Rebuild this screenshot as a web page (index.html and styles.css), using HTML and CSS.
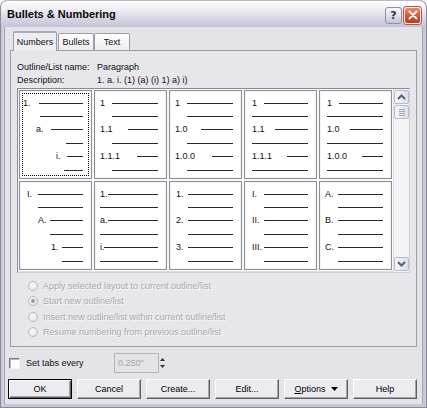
FILE: index.html
```html
<!DOCTYPE html>
<html>
<head>
<meta charset="utf-8">
<link rel="stylesheet" href="styles.css">
</head>
<body>
<div class="window">
  <div class="titlebar">
    <span class="title">Bullets &amp; Numbering</span>
    <div class="tbtns">
      <span class="tb help">?</span>
      <span class="tb close"><svg width="10" height="10" viewBox="0 0 10 10"><path d="M1.5 1.5 L8.5 8.5 M8.5 1.5 L1.5 8.5" stroke="#fff" stroke-width="2" stroke-linecap="round"/></svg></span>
    </div>
  </div>
  <div class="client">
    <div class="tabs">
      <span class="tab active">Numbers</span>
      <span class="tab t-bul">Bullets</span>
      <span class="tab t-txt">Text</span>
    </div>
    <div class="panel">
      <div class="info">
        <span>Outline/List name:</span><span>Paragraph</span>
        <span>Description:</span><span>1. a. i. (1) (a) (i) 1) a) i)</span>
      </div>
      <div class="gallery">
        <div class="cells">
          <div class="cell sel">
            <div class="r p3"><b class="w16">1.</b><i></i></div>
            <div class="r p20"><i></i></div>
            <div class="r p16"><b class="w15">a.</b><i></i></div>
            <div class="r p46"><i></i></div>
            <div class="r p36"><b class="w11">i.</b><i></i></div>
            <div class="r p44"><i></i></div>
          </div>
          <div class="cell">
            <div class="r p5"><b class="w12">1</b><i></i></div>
            <div class="r p17"><i></i></div>
            <div class="r p5"><b class="w28">1.1</b><i></i></div>
            <div class="r p17"><i></i></div>
            <div class="r p5"><b class="w37">1.1.1</b><i></i></div>
            <div class="r p17"><i></i></div>
          </div>
          <div class="cell">
            <div class="r p5"><b class="w12">1</b><i></i></div>
            <div class="r p17"><i></i></div>
            <div class="r p5"><b class="w26">1.0</b><i></i></div>
            <div class="r p17"><i></i></div>
            <div class="r p5"><b class="w37">1.0.0</b><i></i></div>
            <div class="r p17"><i></i></div>
          </div>
          <div class="cell">
            <div class="r p7"><b class="w12">1</b><i></i></div>
            <div class="r p7"><i></i></div>
            <div class="r p7"><b class="w23">1.1</b><i></i></div>
            <div class="r p7"><i></i></div>
            <div class="r p7"><b class="w35">1.1.1</b><i></i></div>
            <div class="r p7"><i></i></div>
          </div>
          <div class="cell">
            <div class="r p7"><b class="w12">1</b><i></i></div>
            <div class="r p7"><i></i></div>
            <div class="r p7"><b class="w23">1.0</b><i></i></div>
            <div class="r p7"><i></i></div>
            <div class="r p7"><b class="w35">1.0.0</b><i></i></div>
            <div class="r p7"><i></i></div>
          </div>
          <div class="cell">
            <div class="r p7"><b class="w11">I.</b><i></i></div>
            <div class="r p18"><i></i></div>
            <div class="r p18"><b class="w12">A.</b><i></i></div>
            <div class="r p30"><i></i></div>
            <div class="r p31"><b class="w11">1.</b><i></i></div>
            <div class="r p42"><i></i></div>
          </div>
          <div class="cell">
            <div class="r p5"><b class="w8">1.</b><i></i></div>
            <div class="r p5"><i></i></div>
            <div class="r p5"><b class="w8">a.</b><i></i></div>
            <div class="r p5"><i></i></div>
            <div class="r p5"><b class="w4">i.</b><i></i></div>
            <div class="r p5"><i></i></div>
          </div>
          <div class="cell">
            <div class="r p6"><b class="w12">1.</b><i></i></div>
            <div class="r p18"><i></i></div>
            <div class="r p6"><b class="w12">2.</b><i></i></div>
            <div class="r p18"><i></i></div>
            <div class="r p6"><b class="w12">3.</b><i></i></div>
            <div class="r p18"><i></i></div>
          </div>
          <div class="cell">
            <div class="r p7"><b class="w12">I.</b><i></i></div>
            <div class="r p19"><i></i></div>
            <div class="r p7"><b class="w12">II.</b><i></i></div>
            <div class="r p19"><i></i></div>
            <div class="r p7"><b class="w12">III.</b><i></i></div>
            <div class="r p19"><i></i></div>
          </div>
          <div class="cell">
            <div class="r p5"><b class="w13">A.</b><i></i></div>
            <div class="r p18"><i></i></div>
            <div class="r p5"><b class="w13">B.</b><i></i></div>
            <div class="r p18"><i></i></div>
            <div class="r p5"><b class="w13">C.</b><i></i></div>
            <div class="r p18"><i></i></div>
          </div>
        </div>
        <div class="vscroll">
          <span class="sbtn"><svg width="9" height="6" viewBox="0 0 9 6"><path d="M1 5 L4.5 1.5 L8 5" fill="none" stroke="#4d6185" stroke-width="2"/></svg></span>
          <span class="thumb"><i></i><i></i><i></i><i></i></span>
          <span class="track"></span>
          <span class="sbtn"><svg width="9" height="6" viewBox="0 0 9 6"><path d="M1 1 L4.5 4.5 L8 1" fill="none" stroke="#4d6185" stroke-width="2"/></svg></span>
        </div>
      </div>
      <div class="radios">
        <label class="radio"><span class="dot"></span>Apply selected layout to current outline/list</label>
        <label class="radio"><span class="dot on"></span>Start new outline/list</label>
        <label class="radio"><span class="dot"></span>Insert new outline/list within current outline/list</label>
        <label class="radio"><span class="dot"></span>Resume numbering from previous outline/list</label>
      </div>
    </div>
    <div class="tabsrow">
      <span class="check"></span>
      <span class="tlabel">Set tabs every</span>
      <span class="spin"><span class="field">0.250"</span><span class="arrows"><svg width="7" height="14" viewBox="0 0 7 14"><path d="M3.5 2 L6 5 L1 5 Z M1 9 L6 9 L3.5 12 Z" fill="#333"/></svg></span></span>
    </div>
    <div class="buttons">
      <span class="btn def">OK</span>
      <span class="btn">Cancel</span>
      <span class="btn">Create...</span>
      <span class="btn">Edit...</span>
      <span class="btn"><span><u>O</u>ptions</span><svg width="7" height="4" viewBox="0 0 7 4"><path d="M0 0 L7 0 L3.5 4 Z" fill="#000"/></svg></span>
      <span class="btn">Help</span>
    </div>
  </div>
</div>
</body>
</html>
```
FILE: styles.css
```css
* { box-sizing: border-box; }
html, body { margin: 0; padding: 0; background: #ffffff; }
body {
  font-family: "Liberation Sans", Arial, sans-serif;
  font-size: 9px;
  color: #000;
}
.window {
  width: 427px;
  height: 408px;
  display: flex;
  flex-direction: column;
  background: linear-gradient(to right, #b7b7c6 0, #dcdce6 2px, #c9c9d6 3px);
  padding: 0 3px 3px 3px;
  border: 1px solid #8b8ba0;
  border-top: none;
  border-radius: 7px 7px 0 0;
  overflow: hidden;
}
.titlebar {
  height: 27px;
  flex: none;
  margin: 0 -3px;
  padding: 0 5px 0 6px;
  display: flex;
  align-items: center;
  justify-content: space-between;
  background: linear-gradient(to bottom, #ffffff 0%, #f2f2f7 25%, #dcdce6 60%, #c3c3d3 100%);
  border-top: 1px solid #b9b9c9;
  border-radius: 7px 7px 0 0;
}
.title {
  font-size: 11px;
  font-weight: bold;
  color: #0a0a0a;
  letter-spacing: 0;
}
.tbtns { display: flex; gap: 2px; margin-top: 2px; }
.tb {
  width: 17px;
  height: 17px;
  border-radius: 3px;
  display: flex;
  align-items: center;
  justify-content: center;
}
.help {
  background: linear-gradient(to bottom, #f8f8fc, #c5c7d6);
  border: 1px solid #8d8fa5;
  color: #30304a;
  font-weight: bold;
  font-size: 11px;
  font-family: "DejaVu Sans", sans-serif;
}
.close {
  background: linear-gradient(to bottom, #ef8c6c, #d84b2e 60%, #c23a20);
  border: 1px solid #f0f0f0;
  box-shadow: 0 0 0 1px #b45a4a;
}
.client {
  flex: 1;
  background: #e3e3e8;
  padding: 4px 5px 0 5px;
  display: flex;
  flex-direction: column;
  border-left: 1px solid #a4a4b4;
  border-right: 1px solid #a4a4b4;
}
.tabs {
  display: flex;
  align-items: flex-end;
  padding-left: 3px;
  height: 19px;
  position: relative;
  z-index: 1;
}
.tab {
  height: 17px;
  display: flex;
  align-items: center;
  justify-content: center;
  background: linear-gradient(to bottom, #ffffff, #ececf0);
  border: 1px solid #9c9caa;
  border-bottom: none;
  border-radius: 2px 2px 0 0;
  color: #111;
}
.tab.active {
  width: 44px;
  height: 20px;
  margin-bottom: -1px;
  background: #eeeef2;
  border-top: 2px solid #a9a9bb;
}
.t-bul { width: 36px; margin-left: 1px; }
.t-txt { width: 36px; }
.panel {
  height: 297px;
  flex: none;
  border: 1px solid #9c9cab;
  background: #e6e6eb;
  padding: 9px 7px 0 6px;
}
.info {
  display: grid;
  grid-template-columns: 80px 1fr;
  grid-auto-rows: 13px;
  align-items: center;
  color: #111;
}
.gallery {
  margin-top: 2px;
  width: 393px;
  border: 1px solid #8a8a98;
  border-right-color: #d0d0d8;
  border-bottom-color: #d0d0d8;
  background: #dedee3;
  display: flex;
  padding: 1px 0 1px 1px;
  gap: 2px;
}
.cells {
  display: grid;
  grid-template-columns: repeat(5, 73px);
  grid-template-rows: repeat(2, 89px);
  gap: 2px;
  padding-bottom: 1px;
}
.cell {
  background: #fff;
  border: 1px solid #8f8f99;
  box-shadow: inset 0 0 0 1px #f4f4f4, 0 0 0 1px #f8f8f8;
  padding-top: 5px;
  position: relative;
}
.cell.sel::after {
  content: "";
  position: absolute;
  left: 2px; top: 2px; right: 2px; bottom: 2px;
  border: 1px dotted #000;
}
.r {
  height: 13.4px;
  display: flex;
  align-items: center;
  padding-right: 8px;
}
.r b {
  font-weight: normal;
  flex: none;
  color: #111;
  white-space: nowrap;
}
.r i {
  flex: 1;
  height: 1px;
  background: #2a2a2a;
  margin-top: 1px;
}
.p3 { padding-left: 3px; } .p5 { padding-left: 5px; } .p6 { padding-left: 6px; }
.p7 { padding-left: 7px; } .p16 { padding-left: 16px; } .p17 { padding-left: 17px; }
.p18 { padding-left: 18px; } .p19 { padding-left: 19px; } .p20 { padding-left: 20px; }
.p30 { padding-left: 30px; } .p31 { padding-left: 31px; } .p36 { padding-left: 36px; }
.p42 { padding-left: 42px; } .p44 { padding-left: 44px; } .p46 { padding-left: 46px; }
.w4 { width: 4px; } .w8 { width: 8px; } .w11 { width: 11px; } .w12 { width: 12px; }
.w13 { width: 13px; } .w15 { width: 15px; } .w16 { width: 16px; } .w23 { width: 23px; }
.w26 { width: 26px; } .w28 { width: 28px; } .w35 { width: 35px; } .w37 { width: 37px; }
.vscroll {
  width: 15px;
  margin: -1px 0;
  display: flex;
  flex-direction: column;
  background: #f3f3f5;
  padding: 1px 0;
}
.sbtn {
  height: 14px;
  flex: none;
  display: flex;
  align-items: center;
  justify-content: center;
  background: linear-gradient(to right, #f7f7fa, #dcdde6);
  border: 1px solid #b9bccb;
  border-radius: 2px;
}
.thumb {
  height: 14px;
  margin-top: 1px;
  flex: none;
  display: flex;
  flex-direction: column;
  justify-content: center;
  align-items: center;
  gap: 1px;
  background: linear-gradient(to right, #f7f7fa, #dfe0e8);
  border: 1px solid #b9bccb;
  border-radius: 2px;
}
.thumb i { width: 6px; height: 1px; background: #a4a8bb; }
.track { flex: 1; }
.radios {
  margin-top: 5px;
  padding-left: 11px;
  display: flex;
  flex-direction: column;
}
.radio {
  height: 15.5px;
  display: flex;
  align-items: center;
  gap: 5px;
  color: #a8a8ae;
  text-shadow: 1px 1px 0 #fafafa;
}
.dot {
  width: 10px;
  height: 10px;
  border-radius: 50%;
  border: 1px solid #b9b9c0;
  background: radial-gradient(circle at 40% 40%, #f6f6f6, #e2e2e6);
  display: flex;
  align-items: center;
  justify-content: center;
}
.dot.on::after {
  content: "";
  width: 4px;
  height: 4px;
  border-radius: 50%;
  background: #9a9aa2;
}
.tabsrow {
  display: flex;
  align-items: center;
  height: 20px;
  margin-top: 6px;
  margin-left: -1px;
}
.check {
  width: 11px;
  height: 11px;
  background: #fff;
  border: 1px solid;
  border-color: #7a7a82 #f4f4f4 #f4f4f4 #7a7a82;
  box-shadow: inset 1px 1px 0 #b8b8c0;
}
.tlabel { width: 88px; margin-left: 6px; color: #111; }
.spin { display: flex; align-items: center; height: 20px; }
.field {
  width: 45px;
  height: 20px;
  border: 1px solid #b4b4bc;
  background: #e3e3e8;
  color: #a6a6ad;
  padding: 0 3px;
  display: flex;
  align-items: center;
}
.arrows { display: flex; align-items: center; margin-left: 0; }
.buttons {
  display: flex;
  gap: 5px;
  margin-top: 6px;
  margin-left: -2px;
}
.btn {
  width: 64px;
  height: 20px;
  display: flex;
  align-items: center;
  justify-content: center;
  gap: 5px;
  background: #ececf0;
  border: 1px solid;
  border-color: #ffffff #5f5f66 #5f5f66 #ffffff;
  box-shadow: inset -1px -1px 0 #a3a3ab;
  color: #000;
}
.btn.def {
  border: 1px solid #000;
  box-shadow: inset 1px 1px 0 #fff, inset -1px -1px 0 #5f5f66, inset -2px -2px 0 #a3a3ab;
}
.btn u { text-decoration: underline; }
```
